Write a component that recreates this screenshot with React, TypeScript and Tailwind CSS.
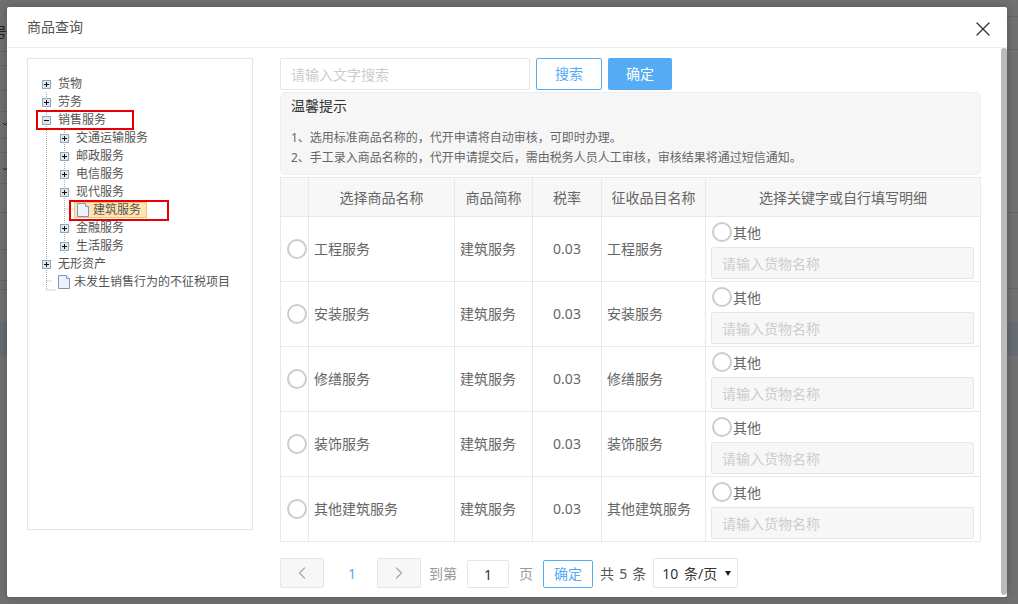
import { ChevronLeft, ChevronRight, X } from "lucide-react";

const rows = [
  { name: "工程服务", tax: "工程服务" },
  { name: "安装服务", tax: "安装服务" },
  { name: "修缮服务", tax: "修缮服务" },
  { name: "装饰服务", tax: "装饰服务" },
  { name: "其他建筑服务", tax: "其他建筑服务" },
];

// page behind the dialog, only the table lines at both edges show through
const leftLines = [52, 14, 25, 21, 27, 14, 31, 29, 37, 31, 9];
const rightLines = [17, 33, 163, 76];

const Toggle = ({ open }: { open?: boolean }) => (
  <svg width="9" height="9" viewBox="0 0 9 9" className="shrink-0">
    <rect x="0.5" y="0.5" width="8" height="8" fill="#dde7ee" stroke="#93a7b8" />
    <path d={open ? "M2 4.5h5" : "M2 4.5h5M4.5 2v5"} stroke="#111" strokeWidth="1" />
  </svg>
);

const Leaf = () => (
  <svg width="12" height="14" viewBox="0 0 12 14" className="shrink-0">
    <path d="M0.5 0.5h8l3 3v10h-11z" fill="#eef3fb" stroke="#7a98c4" />
    <path d="M8.5 0.5v3h3" fill="#fff" stroke="#7a98c4" />
  </svg>
);

const TreeRow = ({ level, label, open }: { level: number; label: string; open?: boolean }) => (
  <div className={`flex h-[18px] items-center gap-[7px] ${level === 0 ? "pl-[14px]" : "pl-[32px]"}`}>
    <Toggle open={open} />
    <span>{label}</span>
  </div>
);

const Radio = () => <span className="block h-[20px] w-[20px] shrink-0 rounded-full border-2 border-[#ccc] bg-white" />;

const Tree = () => (
  <div className="relative h-[472px] w-[226px] shrink-0 border border-[#e6e6e6] pt-[15px] text-[12px] leading-[18px] text-[#555]">
    <svg width="120" height="240" className="absolute left-[0px] top-[15px]">
      <path
        d="M18.5 18V216M18.5 9h6M18.5 27h6M18.5 45h6M18.5 207h6M18.5 216h10M36.5 54V180M36.5 63h6M36.5 81h6M36.5 99h6M36.5 117h6M36.5 153h6M36.5 171h6M36.5 135h10"
        stroke="#aaa"
        strokeDasharray="1 1"
        fill="none"
      />
    </svg>
    <div className="relative pt-[1px]">
      <TreeRow level={0} label="货物" />
      <TreeRow level={0} label="劳务" />
      <TreeRow level={0} label="销售服务" open />
      <TreeRow level={1} label="交通运输服务" />
      <TreeRow level={1} label="邮政服务" />
      <TreeRow level={1} label="电信服务" />
      <TreeRow level={1} label="现代服务" />
      <div className="flex h-[18px] items-center pl-[46px]">
        <div className="flex h-[16px] w-[73px] items-center gap-[4px] border border-[#f5c27a] bg-[#ffe6b0] pl-[2px]">
          <Leaf />
          <span>建筑服务</span>
        </div>
      </div>
      <TreeRow level={1} label="金融服务" />
      <TreeRow level={1} label="生活服务" />
      <TreeRow level={0} label="无形资产" />
      <div className="flex h-[18px] items-center gap-[4px] pl-[30px]">
        <Leaf />
        <span>未发生销售行为的不征税项目</span>
      </div>
    </div>
    {/* annotations drawn over the tree */}
    <div className="absolute left-[8px] top-[51px] h-[20px] w-[98px] border-2 border-[#e60000]" />
    <div className="absolute left-[41px] top-[141px] h-[21px] w-[100px] border-2 border-[#e60000]" />
  </div>
);

const Table = () => (
  <table className="w-[701px] table-fixed border-collapse border border-[#e8e8e8] text-[14px] text-[#666]">
    <colgroup>
      <col className="w-[28px]" />
      <col className="w-[146px]" />
      <col className="w-[78px]" />
      <col className="w-[69px]" />
      <col className="w-[104px]" />
      <col />
    </colgroup>
    <thead>
      <tr className="h-[39px] bg-[#f7f7f7] text-center">
        <th className="border border-[#e8e8e8] font-normal" />
        <th className="border border-[#e8e8e8] font-normal">选择商品名称</th>
        <th className="border border-[#e8e8e8] font-normal">商品简称</th>
        <th className="border border-[#e8e8e8] font-normal">税率</th>
        <th className="border border-[#e8e8e8] font-normal">征收品目名称</th>
        <th className="border border-[#e8e8e8] font-normal">选择关键字或自行填写明细</th>
      </tr>
    </thead>
    <tbody>
      {rows.map((row) => (
        <tr key={row.name} className="h-[65px]">
          <td className="border border-[#e8e8e8] pl-[6px]">
            <Radio />
          </td>
          <td className="border border-[#e8e8e8] pb-[1px] pl-[5px]">{row.name}</td>
          <td className="border border-[#e8e8e8] pb-[1px] pl-[5px]">建筑服务</td>
          <td className="border border-[#e8e8e8] pb-[1px] text-center">0.03</td>
          <td className="border border-[#e8e8e8] pb-[1px] pl-[5px]">{row.tax}</td>
          <td className="border border-[#e8e8e8] pl-[5px] pr-[6px] pt-[3px]">
            <div className="flex h-[20px] items-center pl-[1px]">
              <Radio />
              <span className="ml-[1px]">其他</span>
            </div>
            <div className="mt-[5px] flex h-[32px] items-center rounded-[2px] border border-[#e6e6e6] bg-[#f7f7f7] pl-[10px] text-[#ccc]">
              请输入货物名称
            </div>
          </td>
        </tr>
      ))}
    </tbody>
  </table>
);

const Pager = () => (
  <div className="mt-[16px] flex h-[30px] items-center text-[14px]">
    <div className="flex h-[30px] w-[44px] items-center justify-center rounded-[2px] border border-[#e6e6e6] bg-[#f7f7f7] text-[#aaa]">
      <ChevronLeft size={20} strokeWidth={1.5} />
    </div>
    <span className="w-[53px] pl-[3px] text-center text-[#55acf5]">1</span>
    <div className="flex h-[30px] w-[44px] items-center justify-center rounded-[2px] border border-[#e6e6e6] bg-[#f7f7f7] text-[#aaa]">
      <ChevronRight size={20} strokeWidth={1.5} />
    </div>
    <span className="ml-[8px] text-[#999]">到第</span>
    <div className="ml-[10px] mt-[2px] flex h-[28px] w-[42px] items-center justify-center rounded-[2px] border border-[#e6e6e6] text-[#333]">1</div>
    <span className="ml-[10px] text-[#999]">页</span>
    <div className="ml-[10px] mt-[2px] flex h-[28px] w-[50px] items-center justify-center rounded-[2px] border border-[#55acf5] pb-[1px] text-[#55acf5]">确定</div>
    <span className="ml-[7px] text-[#555] [word-spacing:1.5px]">共 5 条</span>
    <div className="ml-[7px] flex h-[30px] w-[85px] items-center gap-[8px] rounded-[2px] border border-[#e6e6e6] pl-[8px] text-[#333]">
      <span className="[word-spacing:2px]">10 条/页</span>
      <svg width="6" height="5" viewBox="0 0 6 5">
        <path d="M0 0h6L3 5z" fill="#222" />
      </svg>
    </div>
  </div>
);

export default function App() {
  return (
    <div
      className="flex h-[604px] w-[1018px] overflow-hidden bg-[#717171] text-[#555]"
      style={{ fontFamily: '"Noto Sans", "Noto Sans CJK SC", sans-serif' }}
    >
      <div className="w-[7px] shrink-0 overflow-hidden">
        {leftLines.map((h, i) => (
          <div key={i} className="flex justify-end border-b border-[#646464]" style={{ height: h }}>
            {i === 0 && <span className="mt-[22px] shrink-0 text-[14px] leading-[20px] text-[#222]">号</span>}
            {i === 4 && (
              <svg width="4" height="4" viewBox="0 0 4 4" className="mt-[10px] shrink-0">
                <path d="M0 1l2 2 2-2" stroke="#222" fill="none" />
              </svg>
            )}
            {i === 6 && (
              <svg width="4" height="4" viewBox="0 0 4 4" className="mt-[14px] shrink-0">
                <path d="M0 1l2 2 2-2" stroke="#222" fill="none" />
              </svg>
            )}
          </div>
        ))}
        <div className="mt-[32px] h-[34px] bg-[#666c72]" />
      </div>

      <div className="z-10 w-[1000px] shrink-0 pt-[7px]">
        <div className="flex h-[590px] w-[1000px] flex-col rounded-[2px] bg-white shadow-[0_0_10px_rgba(0,0,0,0.25)]">
          <div className="flex h-[41px] shrink-0 items-center justify-between border-b border-[#eee] pb-[2px] pl-[20px] pr-[12px] text-[14px] text-[#555]">
            <span>商品查询</span>
            <X size={24} strokeWidth={1.3} className="mt-[5px] text-[#333]" />
          </div>
          <div className="flex min-h-0 flex-1">
            <div className="flex flex-1 gap-[27px] pl-[20px] pt-[10px]">
              <Tree />
              <div className="w-[701px]">
                <div className="flex h-[32px] gap-[6px] text-[14px]">
                  <div className="flex w-[250px] items-center rounded-[2px] border border-[#e6e6e6] pl-[10px] text-[#ccc]">请输入文字搜索</div>
                  <div className="flex w-[66px] items-center justify-center rounded-[2px] border border-[#55acf5] pb-[1px] text-[#55acf5]">搜索</div>
                  <div className="flex w-[64px] items-center justify-center rounded-[2px] bg-[#55acf5] pb-[1px] text-white">确定</div>
                </div>
                <div className="mt-[2px] h-[83px] rounded-[6px] border border-[#eee] bg-[#f6f6f6] pl-[10px] pt-[3px] text-[12px] leading-[20px] text-[#666]">
                  <p className="text-[14px] text-[#333]">温馨提示</p>
                  <p className="mt-[12px]">1、选用标准商品名称的，代开申请将自动审核，可即时办理。</p>
                  <p>2、手工录入商品名称的，代开申请提交后，需由税务人员人工审核，审核结果将通过短信通知。</p>
                </div>
                <div className="mt-[2px]">
                  <Table />
                </div>
                <Pager />
              </div>
            </div>
            <div className="mb-[2px] w-[6px] shrink-0 rounded-[3px] bg-[#bbb]" />
          </div>
        </div>
      </div>

      <div className="w-[11px] shrink-0">
        {rightLines.map((h, i) => (
          <div key={i} className="border-b border-[#646464]" style={{ height: h }} />
        ))}
        <div className="mt-[33px] h-[34px] bg-[#666c72]" />
      </div>
    </div>
  );
}
